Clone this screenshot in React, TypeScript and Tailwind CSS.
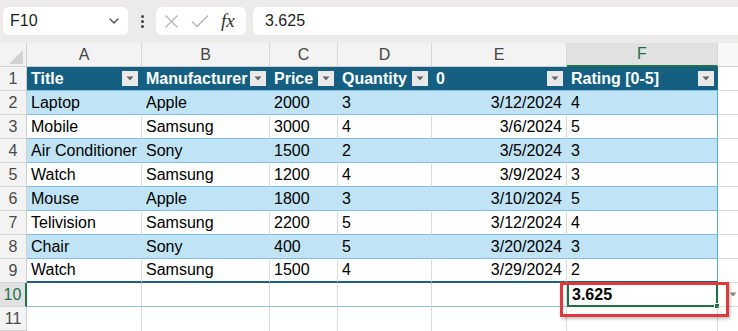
import { ChevronDown } from 'lucide-react'

interface Product {
  title: string
  maker: string
  price: number
  qty: number
  date: string
  rating: number
}

const products: Product[] = [
  { title: 'Laptop', maker: 'Apple', price: 2000, qty: 3, date: '3/12/2024', rating: 4 },
  { title: 'Mobile', maker: 'Samsung', price: 3000, qty: 4, date: '3/6/2024', rating: 5 },
  { title: 'Air Conditioner', maker: 'Sony', price: 1500, qty: 2, date: '3/5/2024', rating: 3 },
  { title: 'Watch', maker: 'Samsung', price: 1200, qty: 4, date: '3/9/2024', rating: 3 },
  { title: 'Mouse', maker: 'Apple', price: 1800, qty: 3, date: '3/10/2024', rating: 5 },
  { title: 'Telivision', maker: 'Samsung', price: 2200, qty: 5, date: '3/12/2024', rating: 4 },
  { title: 'Chair', maker: 'Sony', price: 400, qty: 5, date: '3/20/2024', rating: 3 },
  { title: 'Watch', maker: 'Samsung', price: 1500, qty: 4, date: '3/29/2024', rating: 2 },
]

// column widths A..F
const widths = ['w-[115px]', 'w-[128px]', 'w-[68px]', 'w-[94px]', 'w-[135px]', 'w-[151px]']
const letters = ['A', 'B', 'C', 'D', 'E', 'F']
const headers = ['Title', 'Manufacturer', 'Price', 'Quantity', '0', 'Rating [0-5]']

const FilterButton = () => (
  <span className="w-[16px] h-[15px] bg-[#e9e9e9] flex items-center justify-center shrink-0">
    <svg width="8" height="5" viewBox="0 0 8 5">
      <path d="M0.5 0.5h7L4 4.5z" fill="#666" />
    </svg>
  </span>
)

const RowNum = ({ n, selected }: { n: number; selected?: boolean }) => (
  <div
    className={`w-[27px] h-[24px] shrink-0 flex items-center justify-center text-[16px] border-b border-[#d6d6d6] ${
      selected
        ? 'bg-[#e1e1e1] text-[#1e7145] border-r-2 border-r-[#1e7145]'
        : 'bg-[#f3f3f3] text-[#4a4a4a] border-r border-r-[#cfcfcf]'
    }`}
  >
    {n}
  </div>
)

export default function App() {
  return (
    <div
      className="relative w-[738px] h-[331px] overflow-hidden bg-white text-black"
      style={{ fontFamily: '"Liberation Sans", Arial, sans-serif' }}
    >
      {/* formula bar */}
      <div className="h-[43px] bg-[#ecebea] flex items-start pt-[7px] pl-[3px] gap-[0px]">
        <div className="w-[125px] h-[28px] bg-white rounded-[6px] flex items-center justify-between pl-[7px] pr-[6px] text-[16px] text-[#1f1f1f]">
          <span>F10</span>
          <ChevronDown size={16} strokeWidth={1.8} className="text-[#444]" />
        </div>
        <div className="w-[28px] h-[28px] flex flex-col items-center justify-center gap-[2px]">
          <span className="w-[3px] h-[3px] bg-[#444] rounded-full" />
          <span className="w-[3px] h-[3px] bg-[#444] rounded-full" />
          <span className="w-[3px] h-[3px] bg-[#444] rounded-full" />
        </div>
        <div className="w-[90px] h-[28px] bg-white rounded-[6px] flex items-center pl-[8px] gap-[12px]">
          <svg width="15" height="15" viewBox="0 0 15 15">
            <path d="M1.5 1.5l12 12M13.5 1.5l-12 12" stroke="#b5b5b5" strokeWidth="1.3" />
          </svg>
          <svg width="18" height="14" viewBox="0 0 18 14">
            <path d="M1 7.5l5 5L17 1.5" stroke="#b5b5b5" strokeWidth="1.3" fill="none" />
          </svg>
          <span
            className="text-[19px] italic text-[#333] leading-none -mt-[2px]"
            style={{ fontFamily: '"Liberation Serif", serif' }}
          >
            fx
          </span>
        </div>
        <div className="flex-1 h-[28px] bg-white rounded-l-[6px] ml-[7px] flex items-center pl-[12px] text-[16px] text-[#1f1f1f]">
          3.625
        </div>
      </div>

      {/* column letters */}
      <div className="flex h-[24px]">
        <div className="w-[27px] h-[24px] shrink-0 bg-[#f3f3f3] border-r border-b border-[#cfcfcf] relative overflow-hidden">
          <svg width="27" height="24" viewBox="0 0 27 24" className="absolute inset-0">
            <path d="M23 7v14H9z" fill="#d3d3d3" />
          </svg>
        </div>
        {letters.map((l, i) => (
          <div
            key={l}
            className={`${widths[i]} h-[24px] shrink-0 flex items-center justify-center text-[16px] border-r border-r-[#d6d6d6] ${
              l === 'F'
                ? 'bg-[#e1e1e1] text-[#1e7145] border-b-2 border-b-[#1e7145]'
                : 'bg-[#f3f3f3] text-[#444] border-b border-b-[#cfcfcf]'
            }`}
          >
            {l}
          </div>
        ))}
        <div className="flex-1 h-[24px] bg-[#f7f7f7] border-b border-[#cfcfcf]" />
      </div>

      {/* table header row */}
      <div className="flex h-[24px]">
        <RowNum n={1} />
        {headers.map((h, i) => (
          <div
            key={h}
            className={`${widths[i]} h-[24px] shrink-0 bg-[#156082] text-white font-bold text-[16px] flex items-center justify-between pl-[4px] pr-[4px] border-b border-b-[#7cbfe0]`}
          >
            <span className="whitespace-nowrap">{h}</span>
            <FilterButton />
          </div>
        ))}
        <div className="flex-1 h-[24px] border-b border-[#dadada]" />
      </div>

      {/* table body */}
      {products.map((p, r) => {
        const banded = r % 2 === 0
        const last = r === products.length - 1
        const cellBase = `h-[24px] shrink-0 flex items-center text-[16px] whitespace-nowrap ${
          banded ? 'bg-[#c0e4f5] border-r border-r-[#c0e4f5]' : 'bg-white border-r border-r-[#dadada]'
        } ${last ? 'border-b-2 border-b-[#1f5f80]' : 'border-b border-b-[#7cbfe0]'}`
        return (
          <div key={r} className="flex h-[24px]">
            <RowNum n={r + 2} />
            <div className={`${widths[0]} ${cellBase} pl-[4px]`}>{p.title}</div>
            <div className={`${widths[1]} ${cellBase} pl-[4px]`}>{p.maker}</div>
            <div className={`${widths[2]} ${cellBase} pl-[4px]`}>{p.price}</div>
            <div className={`${widths[3]} ${cellBase} pl-[4px]`}>{p.qty}</div>
            <div className={`${widths[4]} ${cellBase} justify-end pr-[4px]`}>{p.date}</div>
            <div
              className={`${widths[5]} h-[24px] shrink-0 flex items-center text-[16px] pl-[4px] border-r border-r-[#5aa7d0] ${
                banded ? 'bg-[#c0e4f5]' : 'bg-white'
              } ${last ? 'border-b-2 border-b-[#1f5f80]' : 'border-b border-b-[#7cbfe0]'}`}
            >
              {p.rating}
            </div>
            <div className="flex-1 h-[24px] border-b border-[#dadada]" />
          </div>
        )
      })}

      {/* row 10 */}
      <div className="flex h-[24px]">
        <RowNum n={10} selected />
        {widths.slice(0, 5).map((w) => (
          <div key={w} className={`${w} h-[24px] shrink-0 border-r border-r-[#dadada] border-b border-b-[#8fc0d8]`} />
        ))}
        <div className="w-[151px] h-[24px] shrink-0 relative border-2 border-[#1e7145] flex items-center pl-[3px] text-[16px] font-bold">
          3.625
          <span className="absolute -right-[4px] -bottom-[4px] w-[6px] h-[6px] bg-[#1e7145] border border-white" />
        </div>
        <div className="flex-1 h-[24px] border-b border-[#dadada] relative">
          <svg width="8" height="5" viewBox="0 0 8 5" className="absolute left-[11px] top-[9px]">
            <path d="M0.5 0.5h7L4 4.5z" fill="#888" />
          </svg>
        </div>
      </div>

      {/* row 11 */}
      <div className="flex h-[24px]">
        <RowNum n={11} />
        {widths.map((w) => (
          <div key={w} className={`${w} h-[24px] shrink-0 border-r border-r-[#dadada]`} />
        ))}
        <div className="flex-1" />
      </div>

      {/* red highlight box */}
      <div className="absolute left-[560px] top-[282px] w-[169px] h-[35px] border-[3px] border-[#e0393b] shadow-[1px_2px_3px_rgba(0,0,0,0.25)] pointer-events-none" />
    </div>
  )
}
